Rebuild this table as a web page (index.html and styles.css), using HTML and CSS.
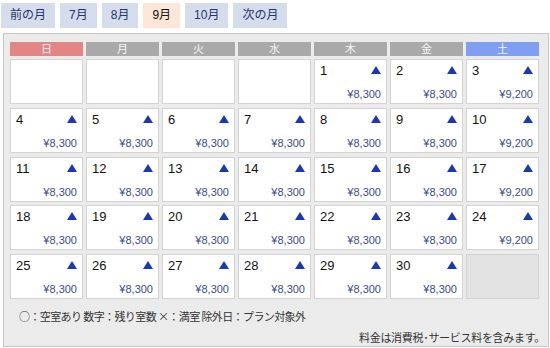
FILE: index.html
```html
<!DOCTYPE html>
<html lang="ja">
<head>
<meta charset="utf-8">
<link rel="stylesheet" href="styles.css">
</head>
<body>
<nav class="tabs">
  <span class="tab">前の月</span>
  <span class="tab">7月</span>
  <span class="tab">8月</span>
  <span class="tab active">9月</span>
  <span class="tab">10月</span>
  <span class="tab">次の月</span>
</nav>
<section class="panel">
  <div class="head">
    <div class="dow sun">日</div>
    <div class="dow">月</div>
    <div class="dow">火</div>
    <div class="dow">水</div>
    <div class="dow">木</div>
    <div class="dow">金</div>
    <div class="dow sat">土</div>
  </div>
  <div class="days" id="days"></div>
  <p class="legend">○：空室あり 数字：残り室数 ×：満室 除外日：プラン対象外</p>
  <p class="note">料金は消費税･サービス料を含みます。</p>
</section>
<script>
  var days = document.getElementById('days');
  var html = '';
  for (var i = 0; i < 4; i++) html += '<div class="cell"></div>';
  for (var d = 1; d <= 30; d++) {
    var sat = (d + 3) % 7 === 6;
    html += '<div class="cell"><div class="top"><span class="num">' + d +
      '</span><svg class="tri" width="10" height="8" viewBox="0 0 10 8"><polygon points="5,0 10,8 0,8"/></svg></div>' +
      '<span class="price">¥' + (sat ? '9,200' : '8,300') + '</span></div>';
  }
  html += '<div class="cell blank"></div>';
  days.innerHTML = html;
</script>
</body>
</html>
```
FILE: styles.css
```css
body {
  margin: 0;
  background: #ffffff;
  font-family: "Liberation Sans", "Noto Sans CJK JP", sans-serif;
  color: #222;
}
.tabs {
  display: flex;
  gap: 5px;
  padding: 3px 0 0 1px;
}
.tab {
  height: 25px;
  line-height: 25px;
  padding: 0 9px;
  font-size: 12px;
  color: #26346e;
  background: #d5dcec;
}
.tab.active {
  background: #fbe6d8;
  color: #111;
}
.panel {
  margin: 5px 0 0 3px;
  width: 544px;
  height: 312px;
  border: 1px solid #c6c6c6;
  background: #ebebeb;
  padding: 0;
  box-sizing: content-box;
}
.head {
  display: grid;
  grid-template-columns: repeat(7, 73px);
  column-gap: 3px;
  margin: 8px 0 0 6px;
}
.dow {
  height: 14px;
  line-height: 14px;
  font-size: 11px;
  text-align: center;
  color: #f4f4f4;
  background: #a9a9a9;
}
.dow.sun { background: #e38585; }
.dow.sat { background: #7f9ff2; }
.days {
  display: grid;
  grid-template-columns: repeat(7, 73px);
  grid-auto-rows: 45px;
  column-gap: 3px;
  row-gap: 3.75px;
  margin: 3px 0 0 6px;
}
.cell {
  box-sizing: border-box;
  background: #ffffff;
  border: 1px solid #d3d3d3;
  display: flex;
  flex-direction: column;
  justify-content: space-between;
  padding: 3px 5px 2px 5px;
}
.cell.blank {
  background: #e3e3e3;
}
.top {
  display: flex;
  justify-content: space-between;
  align-items: flex-start;
}
.num {
  font-size: 13px;
  line-height: 16px;
  color: #111;
}
.tri {
  margin-top: 3px;
  fill: #1a37b5;
}
.price {
  align-self: flex-end;
  font-size: 11px;
  line-height: 13px;
  color: #3a4a8c;
}
.legend {
  margin: 9px 0 0 15px;
  font-family: "Noto Sans CJK JP", sans-serif;
  font-size: 11px;
  line-height: 16px;
  letter-spacing: -0.6px;
  color: #333;
}
.note {
  margin: 5px 3px 0 0;
  text-align: right;
  font-family: "Noto Sans CJK JP", sans-serif;
  font-size: 11px;
  line-height: 16px;
  letter-spacing: -0.3px;
  color: #333;
}
```
